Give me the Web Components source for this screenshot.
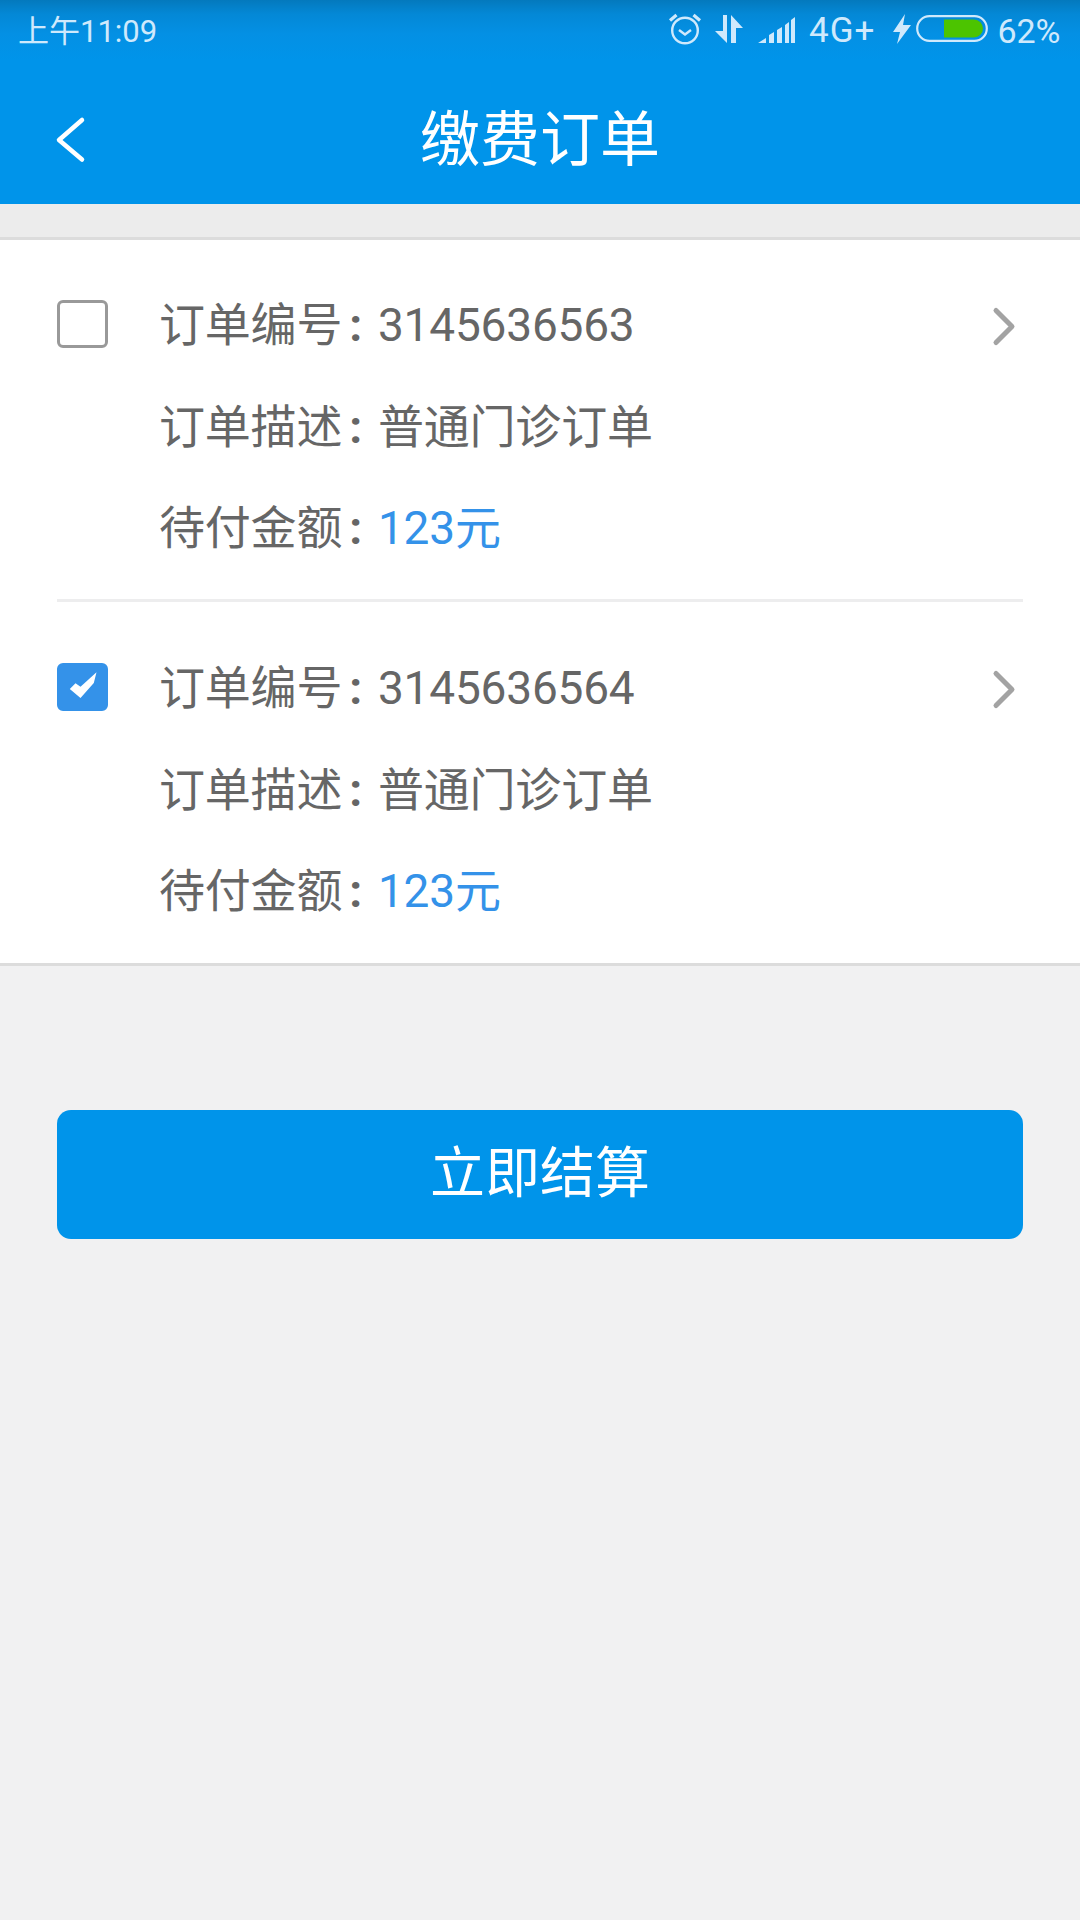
<!DOCTYPE html>
<html lang="zh-CN"><head><meta charset="utf-8"><title>缴费订单</title>
<style>
html,body{margin:0;padding:0;background:#f1f1f2}
body{width:1080px;height:1920px;font-family:Roboto,"Noto Sans CJK SC",sans-serif;overflow:hidden}
</style></head><body>
<app-page></app-page>
<template id="t-status"><style>
:host{display:flex;align-items:center;justify-content:space-between;height:60px;padding:0 19.500px 2px 18px;box-sizing:border-box;color:#cfe9fc;font-size:31px;background:linear-gradient(#0479bd 0,#0488d6 14px,#0490e4 34px,#0094ea 60px)}
.r{display:flex;align-items:center}
svg{display:block}
.t{margin-bottom:2px}
.g{font-size:35px;letter-spacing:1px;margin-top:3px}
.p{font-size:34px;margin-top:3px}
</style>
<span class="t">上午11:09</span>
<div class="r">
<svg width="34" height="34" viewBox="0 0 34 34" fill="none" stroke="#cfe9fc" stroke-width="2.4" style="margin-right:13.500px;margin-top:-1px"><circle cx="17" cy="18.500" r="12.800"/><path d="M11 18l6 4.500 6-4.500"/><path d="M2 8.500L8.500 3M32 8.500L25.500 3" stroke-width="3.200"/></svg>
<svg width="28" height="30" viewBox="0 0 28 30" fill="#cfe9fc" style="margin-right:15px"><path d="M8 1h4v28L0 17h8zM16 29V1l12 13h-7v15z"/></svg>
<svg width="37" height="26" viewBox="0 0 37 26" fill="#cfe9fc" style="margin-right:14px;margin-top:1px"><path d="M0 26l8-5v5zM11 26v-8l5-3v11zM19 26V13l5-3v16zM27 26V8l4-3v21zM33 26V3l4-3v26z"/></svg>
<span class="g" style="margin-right:18px">4G+</span>
<svg width="18" height="30" viewBox="0 0 18 30" fill="#cfe9fc" style="margin-right:5px"><path d="M12 0L0 18h7L4 30l14-19h-8z"/></svg>
<svg width="74" height="28" viewBox="0 0 74 28" style="margin-right:7px"><rect x="1.200" y="1.200" width="69.600" height="24.600" rx="12.300" fill="none" stroke="#cfe9fc" stroke-width="2.200"/><path d="M28 4.500h30a9 9 0 0 1 0 18H28z" fill="#4cc400"/></svg>
<span class="p">62%</span>
</div></template>

<template id="t-bar"><style>
:host{display:flex;align-items:center;justify-content:center;position:relative;height:144px;background:#0094ea;color:#fff;font-size:60px;padding-top:4px;box-sizing:border-box}
svg{position:absolute;left:53px;top:55px}
</style>
<svg width="36" height="50" viewBox="0 0 36 50" fill="none" stroke="#fff" stroke-width="4.500" stroke-linecap="round" stroke-linejoin="round"><path d="M29 5L6 25l23 19.500"/></svg>
<slot></slot></template>

<template id="t-row"><style>
:host{display:block;height:101.500px;line-height:101.500px;font-size:46px;letter-spacing:-.2px;color:#666;white-space:nowrap}
b{font-weight:700;margin:0 16px 0 7px}
::slotted(em){font-style:normal;color:#3492e9}
</style><slot name="k"></slot><b>:</b><slot></slot></template>

<template id="t-order"><style>
:host{display:flex;align-items:flex-start;box-sizing:border-box;margin:0 57px;padding-top:35px;height:361px;position:relative}
:host([sep]){border-bottom:3px solid #ededee;height:362px}
:host([checked]){padding-top:36px}
.box{width:51px;height:48px;box-sizing:border-box;margin:25px 51px 0 0;border:3px solid #999;border-radius:6px;flex:none;background:#fff}
:host([checked]) .box{background:#3492e9;border-color:#3492e9;display:flex;align-items:center;justify-content:center}
.box svg{display:none;filter:blur(.4px)}
:host([checked]) .box svg{display:block}
.c{flex:1}
.ch{flex:none;margin:31px 5px 0 0}
</style>
<div class="box"><svg width="30" height="30" viewBox="0 0 30 30"><path d="M1.800 17L7.500 11.300 12.500 14.700 28.500.3 25.800 11 12.500 26z" fill="#fff"/></svg></div>
<div class="c"><slot></slot></div>
<svg class="ch" width="26" height="42" viewBox="0 0 26 42" fill="none" stroke="#a3a3a3" stroke-width="5" stroke-linecap="round" stroke-linejoin="round"><path d="M4 4.500L20 20.500 4 36.500"/></svg></template>

<template id="t-card"><style>
:host{display:block;background:#fff;border-top:3px solid #dcdcdc;border-bottom:3px solid #dcdcdc}
</style><slot></slot></template>

<template id="t-btn"><style>
:host{display:flex;align-items:center;justify-content:center;height:129px;background:#0094ea;border-radius:14px;color:#fff;font-size:55px;padding-bottom:13px;box-sizing:border-box}
</style><slot></slot></template>

<template id="t-page"><style>
:host{display:block;width:1080px;height:1920px;background:#f1f1f2}
.gap{height:33px;background:#ececec}
.act{padding:144px 57px 0}
</style>
<status-bar></status-bar>
<nav-bar>缴费订单</nav-bar>
<div class="gap"></div>
<order-card>
<order-item sep>
<order-row><span slot="k">订单编号</span>3145636563</order-row>
<order-row><span slot="k">订单描述</span>普通门诊订单</order-row>
<order-row><span slot="k">待付金额</span><em>123元</em></order-row>
</order-item>
<order-item checked>
<order-row><span slot="k">订单编号</span>3145636564</order-row>
<order-row><span slot="k">订单描述</span>普通门诊订单</order-row>
<order-row><span slot="k">待付金额</span><em>123元</em></order-row>
</order-item>
</order-card>
<div class="act"><pay-button>立即结算</pay-button></div>
</template>
<script>
const def=(n,t)=>customElements.define(n,class extends HTMLElement{constructor(){super();this.attachShadow({mode:"open"}).appendChild(document.getElementById(t).content.cloneNode(true))}});
def("status-bar","t-status");def("nav-bar","t-bar");def("order-row","t-row");def("order-item","t-order");def("order-card","t-card");def("pay-button","t-btn");def("app-page","t-page");
</script>
</body></html>
